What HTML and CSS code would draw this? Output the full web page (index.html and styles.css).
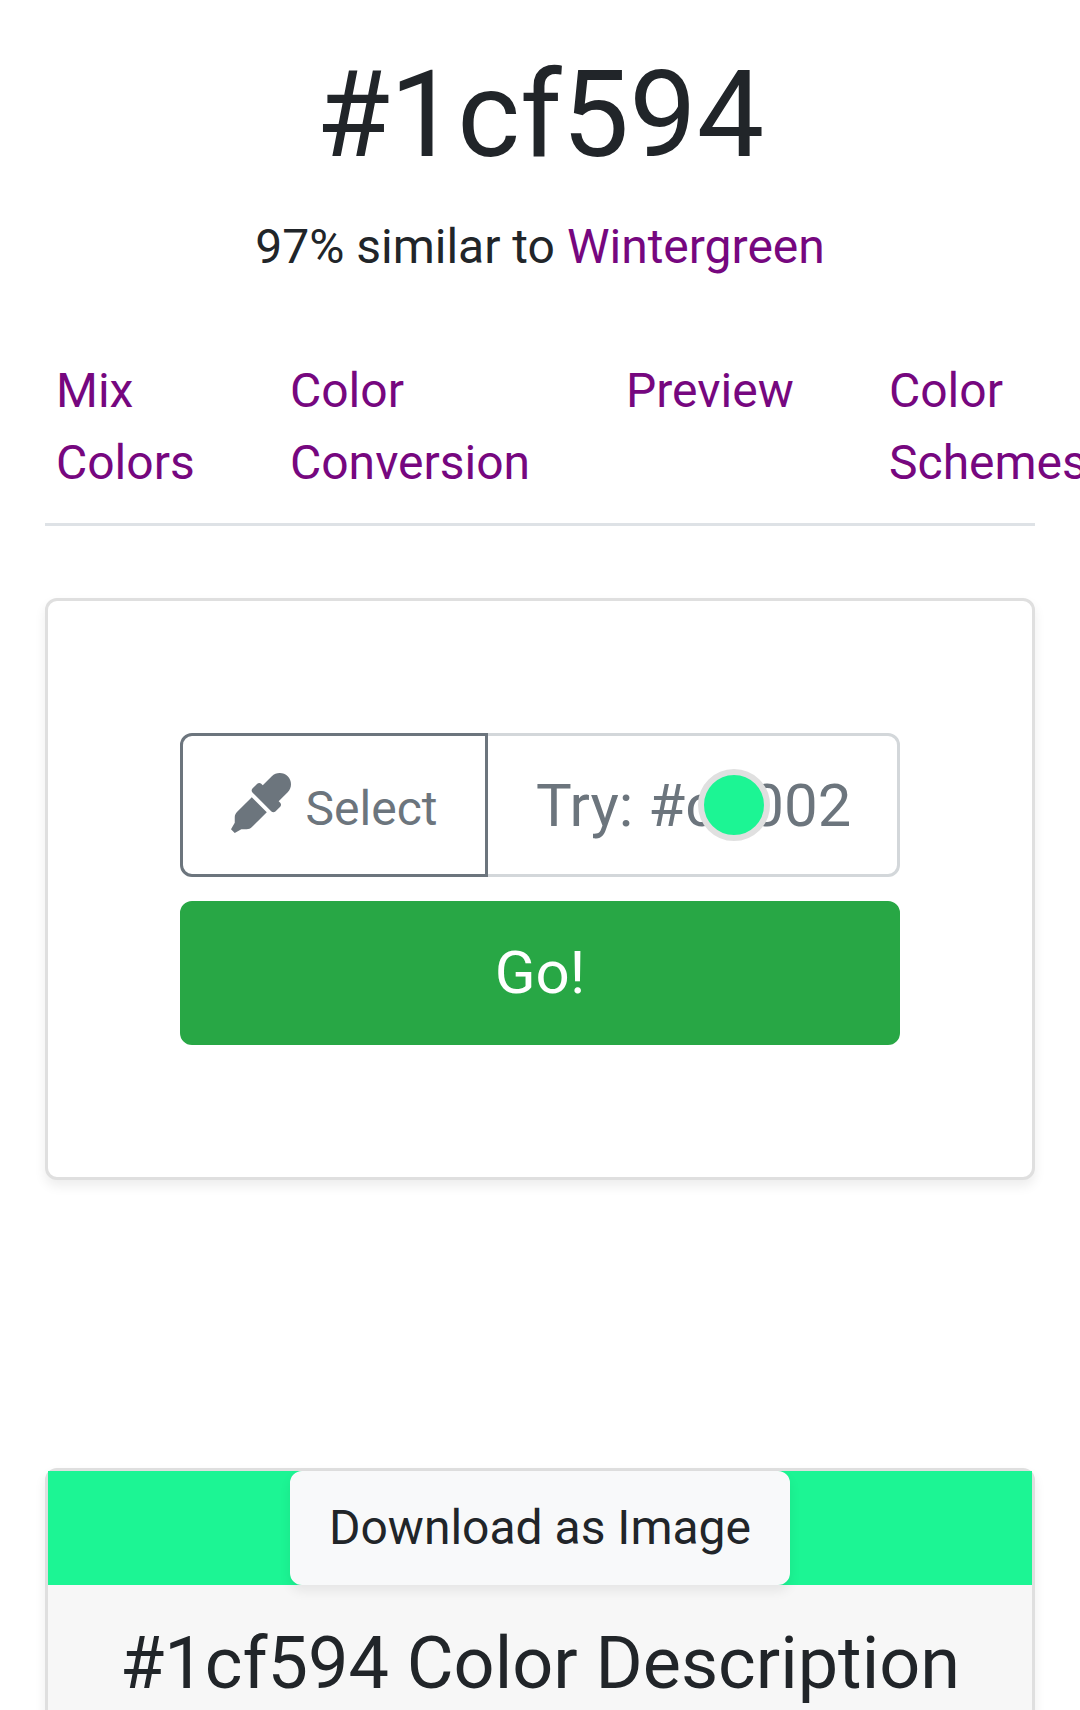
FILE: index.html
```html
<!DOCTYPE html>
<html lang="en">
<head>
<meta charset="utf-8">
<title>#1cf594</title>
<link rel="stylesheet" href="styles.css">
</head>
<body>
<main class="page">
  <h1 class="title">#1cf594</h1>
  <p class="similar">97% similar to <a class="link" href="#">Wintergreen</a></p>
  <nav class="tabs">
    <a class="link tab" href="#">Mix Colors</a>
    <a class="link tab" href="#">Color Conversion</a>
    <a class="link tab" href="#">Preview</a>
    <a class="link tab tab-last" href="#">Color Schemes</a>
  </nav>
  <section class="card form-card">
    <form class="picker">
      <div class="input-group">
        <button class="select-btn" type="button">
          <svg class="dropper" viewBox="0 0 512 512" aria-hidden="true"><path d="M50.75 333.25c-12 12-18.75 28.28-18.75 45.26V424L0 480l32 32 56-32h45.49c16.97 0 33.25-6.74 45.25-18.74l126.64-126.62-128-128L50.75 333.25zM483.88 28.12c-37.47-37.5-98.28-37.5-135.75 0l-77.09 77.09-13.1-13.1c-9.44-9.44-24.65-9.31-33.94 0l-40.97 40.97c-9.37 9.37-9.37 24.57 0 33.94l161.94 161.94c9.44 9.44 24.65 9.31 33.94 0L419.88 288c9.37-9.37 9.37-24.57 0-33.94l-13.1-13.1 77.09-77.09c37.5-37.48 37.5-98.26.01-135.75z"/></svg>
          <span class="select-label">Select</span>
        </button>
        <input class="hex-input" type="text" placeholder="Try: #c0002">
        <span class="swatch-dot"></span>
      </div>
      <button class="go-btn" type="button">Go!</button>
    </form>
  </section>
  <section class="card desc-card">
    <div class="strip"><button class="download-btn" type="button">Download as Image</button></div>
    <div class="desc-header"><h2 class="desc-title">#1cf594 Color Description</h2></div>
  </section>
</main>
</body>
</html>
```
FILE: styles.css
```css
* { box-sizing: border-box; }
html, body { margin: 0; padding: 0; }
body {
  width: 1080px;
  height: 1710px;
  overflow: hidden;
  background: #fff;
  color: #212529;
  font-family: Roboto, "Liberation Sans", sans-serif;
  font-size: 48px;
  line-height: 72px;
}
.page { padding: 43px 45px 0; width: 1080px; height: 1710px; overflow: hidden; }
.title {
  margin: 0 0 24px;
  font-size: 120px;
  font-weight: 400;
  line-height: 144px;
  text-align: center;
}
.similar { margin: 0 0 48px; text-align: center; }
.link { color: #76077f; text-decoration: none; }
.tabs {
  display: grid;
  grid-template-columns: 234px 336px 263px 250px;
  width: 990px;
  border-bottom: 3px solid #dee2e6;
  padding: 0;
}
.tab { padding: 24px 0 24px 11px; }
.tab-last { width: 250px; white-space: normal; }
.card {
  border: 3px solid #dfdfdf;
  border-radius: 12px;
  background: #fff;
  box-shadow: 0 6px 12px rgba(0, 0, 0, .075);
}
.form-card { margin-top: 72px; padding: 132px; }
.picker { display: flex; flex-direction: column; gap: 24px; }
.input-group { position: relative; display: flex; height: 144px; }
.select-btn {
  position: relative;
  z-index: 1;
  flex: 0 0 308px;
  display: flex;
  align-items: center;
  justify-content: center;
  gap: 15px;
  padding: 0;
  border: 3px solid #6c757d;
  border-radius: 12px 0 0 12px;
  background: #fff;
  color: #6c757d;
  font: 400 48px/72px Roboto, "Liberation Sans", sans-serif;
}
.dropper { width: 60px; height: 60px; margin-bottom: 4px; fill: #6c757d; }
.select-label { padding-top: 8px; }
.hex-input {
  flex: 1;
  min-width: 0;
  margin-left: -3px;
  padding: 2px 48px 0;
  border: 3px solid #d3d7da;
  border-radius: 0 12px 12px 0;
  background: #fff;
  color: #495057;
  font: 400 60px/90px Roboto, "Liberation Sans", sans-serif;
  outline: none;
}
.hex-input::placeholder { color: #6c757d; opacity: 1; }
.swatch-dot {
  position: absolute;
  z-index: 2;
  left: 518px;
  top: 36px;
  width: 72px;
  height: 72px;
  border: 6px solid #e0e0e0;
  border-radius: 50%;
  background: #1cf594;
}
.go-btn {
  height: 144px;
  border: 3px solid #28a745;
  border-radius: 12px;
  background: #28a745;
  color: #fff;
  font: 400 60px/90px Roboto, "Liberation Sans", sans-serif;
}
.desc-card { margin-top: 288px; height: 400px; background: #f7f7f7; }
.strip { display: flex; justify-content: center; background: #1cf594; }
.download-btn {
  padding: 18px 36px;
  border: 3px solid #f8f9fa;
  border-radius: 12px;
  background: #f8f9fa;
  color: #212529;
  font: 400 48px/72px Roboto, "Liberation Sans", sans-serif;
  box-shadow: 0 6px 12px rgba(0, 0, 0, .075);
}
.desc-header { padding: 36px 0; }
.desc-title {
  margin: 0;
  font-size: 72px;
  font-weight: 400;
  line-height: 86px;
  text-align: center;
}
```
